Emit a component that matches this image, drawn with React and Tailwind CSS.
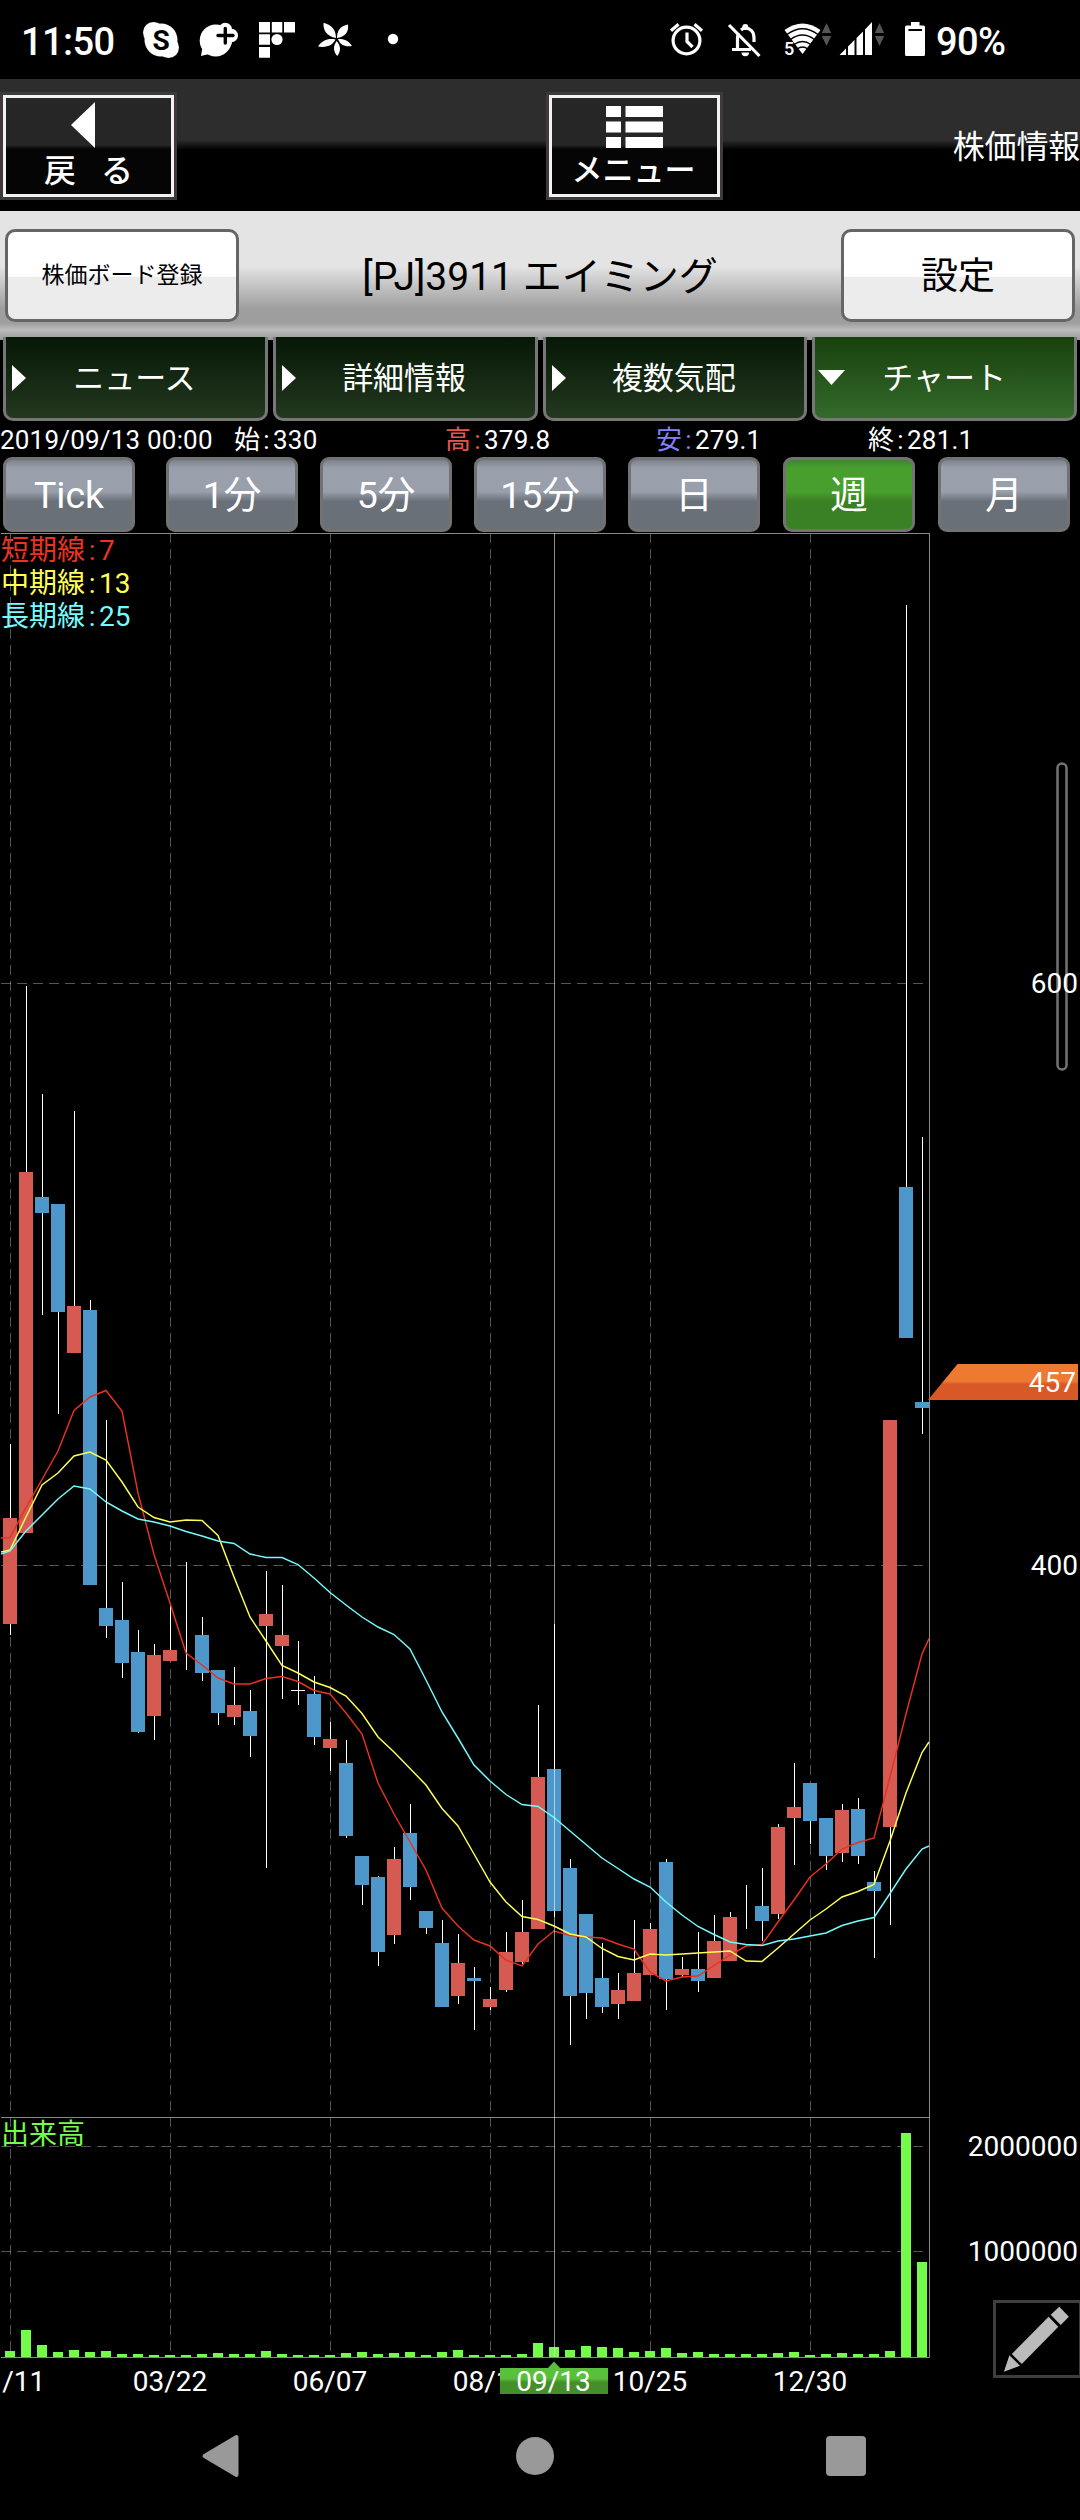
import React from "react";

// One row per week: [direction, high, bodyTop, bodyBottom, low] in chart coordinates.
// r = rising, b = falling, n = unchanged.
const CANDLES = [
  ["r", 1444, 1518, 1624, 1635], ["r", 986, 1172, 1533, 1533], ["b", 1094, 1197, 1213, 1315],
  ["b", 1204, 1204, 1312, 1414], ["r", 1111, 1306, 1353, 1353], ["b", 1300, 1310, 1585, 1585],
  ["b", 1420, 1608, 1626, 1638], ["b", 1582, 1620, 1663, 1678], ["b", 1630, 1652, 1732, 1733],
  ["r", 1644, 1655, 1716, 1740], ["r", 1605, 1650, 1661, 1661], ["n", 1562, 1653, 1653, 1670],
  ["b", 1617, 1635, 1673, 1681], ["b", 1670, 1670, 1713, 1725], ["r", 1667, 1705, 1717, 1725],
  ["b", 1690, 1711, 1736, 1757], ["r", 1571, 1614, 1626, 1868], ["r", 1585, 1635, 1646, 1699],
  ["n", 1641, 1690, 1691, 1705], ["b", 1676, 1694, 1737, 1745], ["r", 1722, 1739, 1748, 1771],
  ["b", 1740, 1763, 1836, 1838], ["b", 1856, 1856, 1885, 1905], ["b", 1876, 1877, 1952, 1966],
  ["r", 1847, 1859, 1935, 1944], ["b", 1804, 1833, 1887, 1900], ["b", 1911, 1911, 1928, 1934],
  ["b", 1920, 1943, 2007, 2007], ["r", 1934, 1963, 1996, 2004], ["b", 1967, 1978, 1981, 2030],
  ["r", 1987, 1999, 2007, 2010], ["r", 1932, 1952, 1990, 1992], ["r", 1900, 1932, 1962, 1964],
  ["r", 1705, 1777, 1929, 1929], ["b", 1624, 1769, 1911, 1917], ["b", 1859, 1868, 1996, 2045],
  ["b", 1914, 1914, 1993, 2019], ["b", 1943, 1978, 2007, 2013], ["r", 1973, 1990, 2004, 2019],
  ["r", 1920, 1973, 2001, 2001], ["r", 1923, 1929, 1975, 1975], ["b", 1859, 1862, 1979, 2010],
  ["r", 1957, 1969, 1975, 1977], ["b", 1932, 1969, 1981, 1992], ["r", 1915, 1941, 1978, 1978],
  ["r", 1912, 1917, 1961, 1961], ["n", 1885, 1900, 1900, 1929], ["b", 1868, 1906, 1921, 1941],
  ["r", 1824, 1827, 1914, 1919], ["r", 1763, 1807, 1818, 1865], ["b", 1783, 1783, 1821, 1844],
  ["b", 1818, 1818, 1856, 1870], ["r", 1804, 1810, 1853, 1862], ["b", 1798, 1809, 1856, 1864],
  ["b", 1871, 1882, 1891, 1958], ["r", 1420, 1420, 1827, 1925], ["b", 605, 1187, 1338, 1338],
  ["b", 1137, 1402, 1408, 1434],
];

const VOLUMES = [
  6, 27, 12, 5, 7, 5, 6, 3, 3, 2, 2, 2, 3, 4, 3, 3, 6, 3, 2, 2, 2, 4, 5, 3, 4, 5, 2, 5, 7,
  2, 2, 2, 3, 14, 10, 7, 11, 10, 9, 5, 6, 9, 4, 5, 3, 3, 3, 3, 4, 5, 2, 3, 4, 3, 3, 6, 224, 95,
];

const SHORT_LINE = [
  1537.5, 1507.5, 1479.5, 1451, 1410.5, 1397, 1390.5, 1411, 1493, 1554.5, 1603, 1653, 1665, 1678,
  1684, 1684, 1678.5, 1676.5, 1681.5, 1690.5, 1694, 1713, 1734, 1783, 1814, 1842, 1870, 1908, 1926,
  1940, 1946, 1960, 1966, 1944, 1931, 1935.5, 1937, 1938, 1944, 1949, 1972, 1981, 1977, 1976,
  1965.5, 1955, 1946, 1944.5, 1922, 1900, 1877, 1864, 1849, 1842.5, 1838, 1777, 1714, 1654,
];
const MIDDLE_LINE = [
  1550, 1517, 1485, 1473, 1456, 1452, 1460, 1482, 1507, 1517.5, 1522, 1520, 1520.5, 1535.5, 1577,
  1617, 1641, 1665.5, 1673, 1682, 1687.5, 1696, 1713.5, 1737, 1752, 1768.5, 1785, 1808.5, 1826,
  1854, 1882, 1902, 1916.5, 1919.5, 1926, 1934, 1937, 1948.5, 1956.5, 1960, 1954, 1955, 1954, 1953,
  1952, 1951, 1961, 1961.5, 1948, 1934, 1920, 1909, 1897, 1891.5, 1884.5, 1841, 1793, 1752.5,
];
const LONG_LINE = [
  1551, 1531, 1515, 1499, 1486, 1489, 1502, 1511, 1519, 1522, 1526, 1531.5, 1536, 1541, 1543.5,
  1554, 1557.5, 1557.5, 1564.5, 1578, 1592.5, 1605, 1617, 1627, 1634.5, 1649, 1680, 1712, 1738,
  1765, 1781, 1794.5, 1804.5, 1806.5, 1817.5, 1831, 1844.5, 1858, 1868.5, 1879, 1887, 1902, 1915,
  1926.5, 1934.5, 1942, 1944.5, 1945.5, 1941, 1939, 1936, 1933, 1925.5, 1921, 1917.5, 1893.5, 1869,
  1849,
];

const linePoints = (start, values, end) =>
  [`1,${start}`, ...values.map((y, i) => `${10 + i * 16},${y}`), `929,${end}`].join(" ");

const CANDLE_FILL = { r: "#d45a52", b: "#4e97ca", n: "#ffffff" };

function StatusBar() {
  return (
    <div className="flex h-[79px] items-center bg-black pl-[21px] text-[38px] leading-none font-medium text-white">
      <span className="w-[92px] shrink-0 whitespace-nowrap pt-[5px] tracking-[-0.6px]">11:50</span>
      <svg className="ml-[27px] h-[79px] w-[280px] shrink-0" viewBox="140 0 280 79" fill="#fff">
        <circle cx="161" cy="40" r="16.5" />
        <circle cx="153.5" cy="32.5" r="10.5" />
        <circle cx="168.500" cy="47.500" r="10.5" />
        <text x="161" y="50" textAnchor="middle" fontSize="28" fontWeight="700" fill="#000">S</text>
        <circle cx="215.700" cy="40.500" r="16" />
        <path d="M203 44 L201 56 L213 53Z" />
        <path d="M225.300 29.500v12M219.300 35.500h12" stroke="#fff" strokeWidth="13.500" strokeLinecap="round" />
        <path d="M225.300 28.500v14.500M218 35.500h15" stroke="#000" strokeWidth="3.400" strokeLinecap="round" />
        <path d="M259 22h11v10.500h-11zM271.800 22h10.500v10.500h-10.500zM284 22h11v10.500h-11zM259 34.300h11v10.500h-11zM259 47h11v10.800h-11z" />
        <circle cx="277" cy="39.500" r="5.600" />
        <path d="M336 38C327 36 323 31 323.500 22.700C332 25 336 30 336 38ZM337 38C337 31 340 26 348 24.500C349 32 345 37 337 38ZM338 39C344 38.500 349 41 352 46C345 47 340 45 338 39ZM336.700 41C341 46 341 51 337.300 56C333 51 333 46 336.700 41ZM335.500 39.500C333 45 327 48 318 46.500C322 40.500 328 38 335.500 39.500Z" />
        <circle cx="393" cy="39" r="5.200" />
      </svg>
      <svg className="ml-auto h-[79px] w-[272px] shrink-0" viewBox="660 0 272 79" fill="#fff">
        <g fill="none" stroke="#fff" strokeWidth="3.200">
          <circle cx="686.500" cy="40.500" r="13.400" />
          <path d="M687 32.500v9l5.500 5.500M671 30.800l7.500-6.500M702 30.800l-7.500-6.500" />
          <path d="M737.500 49V38c0-2 .4-3.500 1-5M741 30c5-4 13-1 13 8v4M732 49.500h19" />
          <path d="M729 25l30.500 31" />
        </g>
        <circle cx="745.300" cy="27" r="3" />
        <path d="M741.500 52.500h7.500a3.700 3.700 0 0 1-7.500 0z" />
        <path d="M802.500 54L784.500 30Q802.500 17 820.500 30Z" />
        <g fill="none" stroke="#000" strokeWidth="1.300">
          <path d="M787 34.500Q802.500 23 818 34.500M790.500 39.500Q802.500 30.500 814.500 39.500M794 44.500Q802.500 38.500 811 44.500M797 49Q802.500 45 808 49" />
        </g>
        <path d="M783 41h8l4 4v12h-12z" fill="#000" />
        <text x="784" y="55" fontSize="18" fontWeight="500">5</text>
        <path d="M826.500 23l4.700 10h-9.400zM826.500 46l4.700-10h-9.400zM879.500 23l4.700 10h-9.400zM879.500 46l4.700-10h-9.400z" fill="#555" />
        <path d="M839.500 55l6.500-6.500V55zM848 46.500l6.500-6.500v15H848zM856.500 38l6.500-6.500V55h-6.500zM865 29.500l7-7.500v33h-7z" />
        <path d="M911 22h8.500v3.500h4q1.500 0 1.500 1.500v27.500q0 1.500-1.500 1.500h-17q-1.500 0-1.500-1.500V27q0-1.500 1.500-1.500h4.500z" />
        <path d="M908.500 30h13.500" stroke="#000" strokeWidth="2" />
      </svg>
      <span className="ml-[4px] w-[144px] shrink-0 pt-[5px] tracking-[-0.6px]">90%</span>
    </div>
  );
}

function HeaderButton({ children }) {
  return (
    <button className="h-[108px] w-[177px] shrink-0 border-[3px] border-[#40393a] bg-black p-0">
      <div className="flex h-full w-full flex-col items-center border-[3px] border-[#f2f2f2] bg-[linear-gradient(#262626_0,#262626_47px,#050505_51px,#050505_100%)] text-white">
        {children}
      </div>
    </button>
  );
}

function Header() {
  return (
    <header className="relative flex h-[132px] bg-[linear-gradient(#2d2d2d_0,#2d2d2d_61px,#000_71px,#000_100%)] pt-[13px]">
      <HeaderButton>
        <svg className="mt-[4px] ml-[-11px] h-[46px] w-[24px]" viewBox="0 0 24 46" fill="#fff">
          <path d="M0 23L24 0V46Z" />
        </svg>
        <span className="mt-[4px] flex gap-[25px] text-[32px] leading-[39px] font-medium">
          <span>戻</span><span>る</span>
        </span>
      </HeaderButton>
      <div className="ml-[369px] flex">
        <HeaderButton>
          <svg className="mt-[8px] h-[42px] w-[57px]" viewBox="0 0 57 42" fill="#fff">
            <path d="M0 0h15v11H0zM19.500 0H57v11H19.500zM0 15.500h15v11H0zM19.500 15.500H57v11H19.500zM0 31h15v11H0zM19.500 31H57v11H19.500z" />
          </svg>
          <span className="mt-[4px] -ml-[2px] text-[31px] leading-[38px] font-medium">メニュー</span>
        </HeaderButton>
      </div>
      <span className="ml-auto self-start pt-[32px] text-[32px] leading-[46px] tracking-[-0.2px] text-white">株価情報</span>
    </header>
  );
}

function TitleBar() {
  return (
    <div className="flex h-[129px] items-start justify-between bg-[linear-gradient(#e4e4e4_0,#e4e4e4_55px,#9e9e9e_98px,#9e9e9e_112px,#bcbcbc_119px,#999_129px)] px-[5px] pt-[18px] text-black">
      <button className="h-[93px] w-[234px] rounded-[10px] border-[3px] border-[#666] bg-[linear-gradient(#fff_0,#fff_51%,#ececec_52%,#ececec_100%)] pt-[2px] text-[23px]">
        株価ボード登録
      </button>
      <h1 className="pt-[20px] text-[39px] leading-[56px] whitespace-pre">[PJ]3911 エイミング</h1>
      <button className="h-[93px] w-[234px] rounded-[10px] border-[3px] border-[#666] bg-[linear-gradient(#fff_0,#fff_51%,#ececec_52%,#ececec_100%)] pt-[3px] text-[37px]">
        設定
      </button>
    </div>
  );
}

function Tab({ label, active }) {
  return (
    <button
      className={
        "flex h-[84px] flex-1 items-center rounded-b-[10px] border-[3px] border-t-0 border-[#777] text-[31px] text-white " +
        (active ? "bg-[linear-gradient(#18400d,#346b2b)]" : "bg-[linear-gradient(#061806,#23381f)]")
      }
    >
      {active ? (
        <svg className="ml-[3px] h-[15px] w-[27px]" viewBox="0 0 27 15" fill="#fff"><path d="M0 0H27L13.500 15Z" /></svg>
      ) : (
        <svg className="mr-[7px] ml-[6px] h-[26px] w-[14px]" viewBox="0 0 14 26" fill="#fff"><path d="M0 0L14 13L0 26Z" /></svg>
      )}
      <span className={active ? "flex-1 pt-[3px] pr-[31px]" : "flex-1 pt-[3px] pr-[29px]"}>{label}</span>
    </button>
  );
}

function Quote({ label, value, className }) {
  return (
    <span className="flex">
      <span className={"flex " + className}>{label}<span className="w-[13px] text-center">:</span></span>
      <span className="tracking-[0.2px]">{value}</span>
    </span>
  );
}

function QuoteRow() {
  return (
    <div className="grid h-[36px] grid-cols-[234px_211px_211px_212px_212px] text-[26px] leading-[38px] whitespace-nowrap text-white">
      <span className="tracking-[0.2px]">2019/09/13 00:00</span>
      <Quote label="始" value="330" className="text-white" />
      <Quote label="高" value="379.8" className="text-[#e8554b]" />
      <Quote label="安" value="279.1" className="text-[#8080f8]" />
      <Quote label="終" value="281.1" className="text-white" />
    </div>
  );
}

function PeriodButton({ label, active, className = "" }) {
  return (
    <button
      className={
        "h-[75px] w-[132px] shrink-0 rounded-[9px] border-[3px] border-[#727272] pt-[3px] text-[37.500px] leading-none text-white " +
        (active
          ? "bg-[linear-gradient(#3f8530_0,#489f2d_8px,#489f2d_46%,#3a8024_60%,#3a8024_100%)] "
          : "bg-[linear-gradient(#7d828c_0,#999fab_8px,#999fab_46%,#6a7078_60%,#6a7078_100%)] ") +
        className
      }
    >
      {label}
    </button>
  );
}

function PeriodRow() {
  return (
    <div className="flex h-[76px] pl-[3px]">
      <PeriodButton label="Tick" />
      <PeriodButton label="1分" className="ml-[31px]" />
      <PeriodButton label="5分" className="ml-[22px]" />
      <PeriodButton label="15分" className="ml-[22px]" />
      <PeriodButton label="日" className="ml-[22px]" />
      <PeriodButton label="週" active className="ml-[23px]" />
      <PeriodButton label="月" className="ml-[23px]" />
    </div>
  );
}

function Legend({ label, value, className }) {
  return (
    <div className={"flex " + className}>
      {label}<span className="w-[14px] text-center">:</span>{value}
    </div>
  );
}

function Chart() {
  return (
    <section className="relative h-[1867px]">
      <svg className="block h-[1867px] w-[1080px]" viewBox="0 533 1080 1867">
        <defs>
          <linearGradient id="badge" x1="0" y1="0" x2="0" y2="1">
            <stop offset="0.4" stopColor="#59c03c" />
            <stop offset="0.55" stopColor="#458f2b" />
          </linearGradient>
          <linearGradient id="price" x1="0" y1="0" x2="0" y2="1">
            <stop offset="0.48" stopColor="#ee7930" />
            <stop offset="0.56" stopColor="#d85827" />
          </linearGradient>
          <clipPath id="plot"><rect x="1" y="533" width="928.500" height="1825" /></clipPath>
        </defs>

        <g stroke="#fff" strokeOpacity="0.33" strokeDasharray="10 6">
          {[10, 170, 330, 490, 650, 810].map((x) => (
            <line key={x} x1={x + 0.5} x2={x + 0.5} y1="533" y2="2357" />
          ))}
          {[983.5, 1565.5, 2146.5, 2251.5].map((y) => (
            <line key={y} x1="1" x2="929" y1={y} y2={y} />
          ))}
        </g>

        <g clipPath="url(#plot)">
          {CANDLES.map(([dir, high, top, bottom, low], i) => (
            <g key={i} shapeRendering="crispEdges">
              <rect x={10 + i * 16} y={high} width="1" height={low - high} fill="#fff" />
              <rect x={3 + i * 16} y={top} width="14" height={bottom - top} fill={CANDLE_FILL[dir]} />
            </g>
          ))}
          {VOLUMES.map((h, i) => (
            <rect key={i} x={5 + i * 16} y={2357 - h} width="10" height={h} fill="#75fb4c" />
          ))}
          <g fill="none" strokeWidth="1.450">
            <polyline points={linePoints(1538, SHORT_LINE, 1638.6)} stroke="#e8321f" />
            <polyline points={linePoints(1552, MIDDLE_LINE, 1742)} stroke="#ffff54" />
            <polyline points={linePoints(1554, LONG_LINE, 1846)} stroke="#75fbfd" />
          </g>
        </g>

        <path d="M1 533.500H929.500M1 2117.500H929.500M1 2357.500H929.500V533" fill="none" stroke="#888" />
        <line x1="554.500" x2="554.500" y1="533" y2="2357" stroke="#fff" strokeOpacity="0.55" />

        <g fill="#fff" fontSize="28">
          <text x="1078" y="993" textAnchor="end">600</text>
          <text x="1078" y="1575" textAnchor="end">400</text>
          <text x="1078" y="2156" textAnchor="end">2000000</text>
          <text x="1078" y="2261" textAnchor="end">1000000</text>
          <g textAnchor="middle">
            <text x="8" y="2391">01/11</text>
            <text x="170" y="2391">03/22</text>
            <text x="330" y="2391">06/07</text>
            <text x="490" y="2391">08/16</text>
            <text x="650" y="2391">10/25</text>
            <text x="810" y="2391">12/30</text>
          </g>
          <path d="M500 2368H608V2394H500Z" fill="url(#badge)" />
          <path d="M554 2361.500L560.500 2368.500H547.500Z" fill="#59c03c" />
          <text x="553.500" y="2391" textAnchor="middle">09/13</text>
          <path d="M957.500 1364H1078V1400H928Z" fill="url(#price)" />
          <text x="1076" y="1392" textAnchor="end">457</text>
        </g>

        <rect x="1057.500" y="763.500" width="9" height="306" rx="4.500" fill="none" stroke="#fff" strokeOpacity="0.45" strokeWidth="2.500" />

        <rect x="994.500" y="2301.500" width="86" height="75" fill="#000" stroke="#3f3f3f" strokeWidth="3" />
        <g fill="#bbb">
          <path d="M1059.300 2306.700L1068.900 2316.700L1060.700 2325L1050.700 2314.700Z" />
          <path d="M1048.600 2316.700L1058.300 2326.700L1021.800 2364L1011.800 2354Z" />
          <path d="M1009.400 2355.300L1020 2365.700L1003.900 2371.700Z" />
        </g>
      </svg>

      <div className="absolute top-[1px] left-px text-[28px] leading-[33px]">
        <Legend label="短期線" value="7" className="text-[#e93323]" />
        <Legend label="中期線" value="13" className="text-[#ffff54]" />
        <Legend label="長期線" value="25" className="text-[#75fbfd]" />
      </div>
      <div className="absolute top-[1585px] left-px text-[28px] leading-[33px] text-[#75fb4c]">出来高</div>
    </section>
  );
}

function NavBar() {
  return (
    <nav className="flex h-[120px] items-start pt-[34px] pl-[201px]">
      <svg className="h-[44px] w-[38px]" viewBox="0 0 38 44">
        <path d="M3.500 22L35.500 3V41Z" fill="#999" stroke="#999" strokeWidth="4" strokeLinejoin="round" />
      </svg>
      <div className="mt-[3px] ml-[277px] size-[38px] rounded-full bg-[#999]" />
      <div className="mt-[2px] ml-[272px] size-[40px] rounded-[4px] bg-[#999]" />
    </nav>
  );
}

export default function App() {
  return (
    <main className="h-[2520px] w-[1080px] overflow-hidden bg-black font-[Roboto,'Noto_Sans_CJK_JP',sans-serif]">
      <StatusBar />
      <Header />
      <TitleBar />
      <div className="relative -mt-[3px] flex gap-[5px] px-[3px]">
        <Tab label="ニュース" />
        <Tab label="詳細情報" />
        <Tab label="複数気配" />
        <Tab label="チャート" active />
      </div>
      <QuoteRow />
      <PeriodRow />
      <Chart />
      <NavBar />
    </main>
  );
}
